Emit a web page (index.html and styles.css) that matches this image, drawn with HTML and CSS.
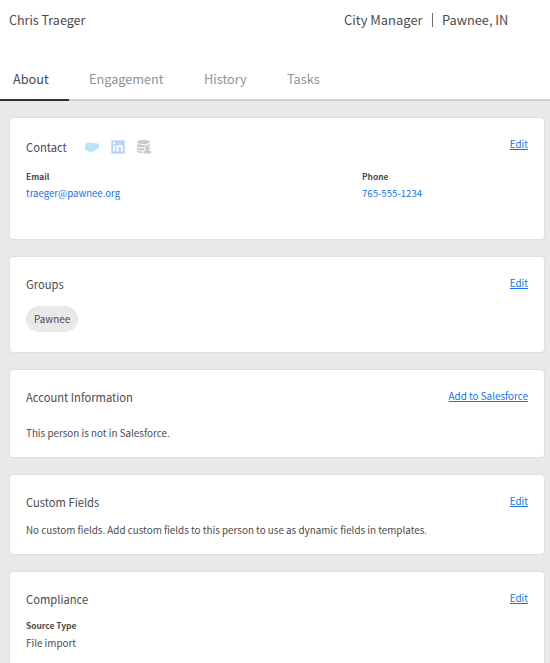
FILE: index.html
```
<!DOCTYPE html>
<html lang="en">
<head>
<meta charset="utf-8">
<title>Chris Traeger</title>
<link rel="stylesheet" href="styles.css">
</head>
<body>
<header class="person">
  <span class="name">Chris Traeger</span>
  <span class="role">City Manager</span>
  <span class="divider"></span>
  <span class="place">Pawnee, IN</span>
</header>
<nav class="tabs">
  <a class="tab active">About</a>
  <a class="tab engagement">Engagement</a>
  <a class="tab history">History</a>
  <a class="tab tasks">Tasks</a>
</nav>
<main class="cards">
  <section class="card contact">
    <div class="card-head">
      <h2>Contact</h2>
      <div class="icons">
        <svg width="16" height="16" viewBox="0 0 16 16" fill="#bae2f5"><circle cx="4.4" cy="6.6" r="3"/><circle cx="8.3" cy="6.5" r="2.9"/><circle cx="12.1" cy="7.2" r="3"/><circle cx="3.7" cy="9" r="2.9"/><circle cx="7" cy="10.2" r="2.9"/><circle cx="10.3" cy="9.3" r="2.4"/></svg>
        <svg width="14" height="14" viewBox="0 0 14 14"><rect width="13.4" height="13.4" x=".3" y=".3" rx="1" fill="#b9d5fb"/><g fill="#fff"><rect x="2.2" y="5.3" width="1.9" height="6.2"/><circle cx="3.15" cy="3.2" r="1.1"/><path d="M5.6 5.3h1.8v.9c.4-.7 1.1-1.1 2-1.1 1.900 0 2.400 1.200 2.400 3v3.400H9.900V8.400c0-.9-.2-1.600-1.100-1.600-1 0-1.300.7-1.300 1.600v3.100H5.600z"/></g></svg>
        <svg width="16" height="16" viewBox="0 0 16 16"><g fill="#c8c8c8"><ellipse cx="7.400" cy="3" rx="6.300" ry="2"/><path d="M1.100 4.800c2 1.500 10.600 1.500 12.600 0v2.400c-2 1.500-10.600 1.500-12.600 0z"/><path d="M1.100 8.200c2 1.300 6 1.400 8 .9v2.100c-3 .5-6.500.2-8-.8z"/><path d="M1.100 11.400c1.800 1 3.800 1.200 6 1.200v1.700c-3 0-6-.6-6-1.700z"/></g><path d="M11.500 6.300c1.600 0 2.600 1.100 2.600 2.700 0 1-.3 1.700-.8 2.300 1.500.4 2.300 1.300 2.300 3.600H7.200c0-2.300.9-3.200 2.400-3.600-.5-.6-.8-1.300-.8-2.300 0-1.600 1.100-2.700 2.700-2.700z" fill="#c8c8c8" stroke="#fff" stroke-width=".9"/></svg>
      </div>
      <a class="action">Edit</a>
    </div>
    <div class="fields">
      <div class="field"><b>Email</b><a>traeger@pawnee.org</a></div>
      <div class="field"><b>Phone</b><a>765-555-1234</a></div>
    </div>
  </section>
  <section class="card groups">
    <div class="card-head"><h2>Groups</h2><a class="action">Edit</a></div>
    <span class="chip">Pawnee</span>
  </section>
  <section class="card account">
    <div class="card-head"><h2>Account Information</h2><a class="action">Add to Salesforce</a></div>
    <p>This person is not in Salesforce.</p>
  </section>
  <section class="card custom">
    <div class="card-head"><h2>Custom Fields</h2><a class="action">Edit</a></div>
    <p>No custom fields. Add custom fields to this person to use as dynamic fields in templates.</p>
  </section>
  <section class="card compliance">
    <div class="card-head"><h2>Compliance</h2><a class="action">Edit</a></div>
    <div class="field"><b>Source Type</b><span>File import</span></div>
  </section>
</main>
</body>
</html>
```
FILE: styles.css
```
* { box-sizing: border-box; }
body {
  margin: 0;
  height: 663px;
  overflow: hidden;
  background: #fff;
  color: #4b4b4b;
  font: 9.86px/16px "Noto Sans CJK SC", "Noto Sans", sans-serif;
  white-space: nowrap;
}
.person {
  display: flex;
  align-items: center;
  height: 60px;
  padding: 0 42px 20px 9px;
  font-size: 12.8px;
}
.name { flex: 1; font-size: 12.5px; }
.role { width: 79px; font-size: 12.95px; }
.divider { width: 1px; height: 14px; margin: 0 9px; background: #6c6c6c; }
.place { width: 66px; }
.tabs {
  display: flex;
  height: 41px;
  border-bottom: 2px solid #d0d0d0;
  color: #929292;
  font-size: 12.7px;
}
.tab { height: 41px; padding-left: 13px; line-height: 37px; }
.tab.active { width: 69px; border-bottom: 2px solid #323232; color: #4b4b4b; }
.engagement { width: 122px; padding-left: 20px; }
.history { width: 83px; }
.cards {
  display: flex;
  flex-direction: column;
  gap: 16px;
  padding: 16px 5px 0 9px;
  height: 562px;
  overflow: hidden;
  background: #e9e9e9;
}
.card {
  flex: none;
  padding: 17px 16px 0;
  border: 1px solid #dfdfdf;
  border-radius: 4px;
  background: #fff;
}
.contact { height: 123px; }
.groups { height: 97px; }
.account { height: 89px; }
.custom { height: 81px; }
.compliance { height: 110px; }
.card-head { display: flex; align-items: flex-start; height: 20px; }
h2 { margin: 0; font-size: 11.2px; font-weight: 400; line-height: 20px; }
.contact h2 { margin-top: 2px; }
.icons { display: flex; align-items: center; gap: 11px; margin: 4px 0 0 17px; }
.action { margin: 1px 0 0 auto; text-decoration: underline; text-underline-offset: 1px; }
.contact .action { margin-top: 1px; }
a.action, .field a { color: #1473e6; }
.fields { display: grid; grid-template-columns: 336px 1fr; margin-top: 13px; }
.field { display: flex; flex-direction: column; }
.field b { font-size: 8.4px; line-height: 17px; }
.field a, .field span { line-height: 18px; }
.field a { font-size: 9.65px; line-height: 16px; }
.chip {
  display: inline-block;
  height: 26px;
  margin-top: 12px;
  padding: 0 8px;
  border-radius: 13px;
  background: #e9e9e9;
  line-height: 27px;
}
p { margin: 0; }
.account p { margin-top: 18px; }
.custom p { margin-top: 10px; }
.compliance .field { margin-top: 8px; }
```
